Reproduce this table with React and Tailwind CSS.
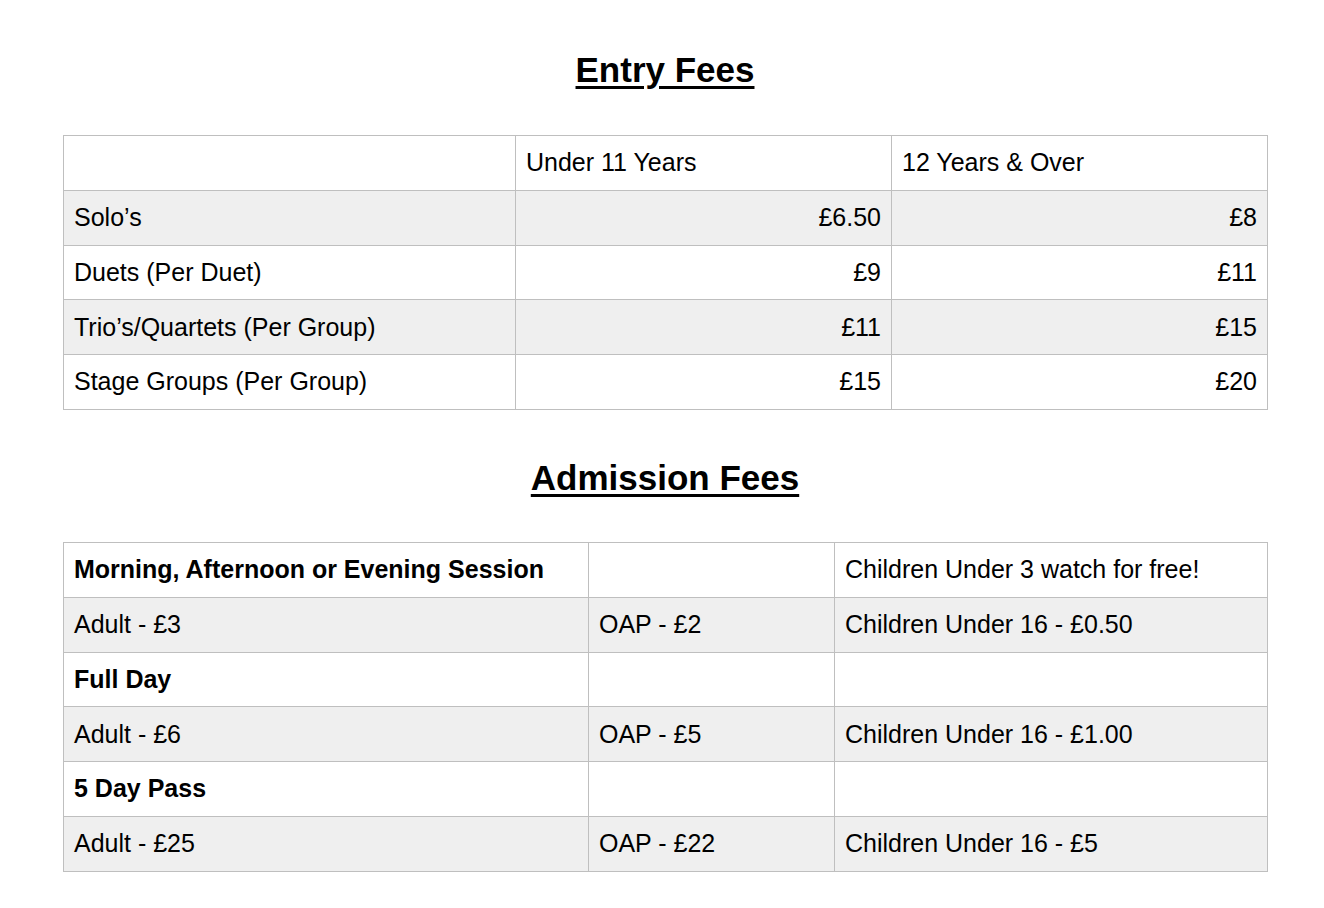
const entry = [
  ['Solo’s', '£6.50', '£8'],
  ['Duets (Per Duet)', '£9', '£11'],
  ['Trio’s/Quartets (Per Group)', '£11', '£15'],
  ['Stage Groups (Per Group)', '£15', '£20'],
]

const admission = [
  { cells: ['Morning, Afternoon or Evening Session', '', 'Children Under 3 watch for free!'], bold: true },
  { cells: ['Adult - £3', 'OAP - £2', 'Children Under 16 - £0.50'] },
  { cells: ['Full Day', '', ''], bold: true },
  { cells: ['Adult - £6', 'OAP - £5', 'Children Under 16 - £1.00'] },
  { cells: ['5 Day Pass', '', ''], bold: true },
  { cells: ['Adult - £25', 'OAP - £22', 'Children Under 16 - £5'] },
]

function Title({ children, className }) {
  return (
    <h2 className={`text-center text-[35px] leading-[40px] font-bold underline decoration-[3px] underline-offset-[4px] ${className}`}>
      {children}
    </h2>
  )
}

export default function App() {
  return (
    <div className="min-h-[908px] bg-white text-black" style={{ fontFamily: '"Liberation Sans", Arial, sans-serif' }}>
      <div className="ml-[63px] w-[1204px] pt-[50px]">
        <Title className="mb-[45px]">Entry Fees</Title>

        <table className="w-[1204px] table-fixed border-collapse text-[25px]">
          <colgroup>
            <col className="w-[452px]" />
            <col className="w-[376px]" />
            <col className="w-[376px]" />
          </colgroup>
          <tbody>
            <tr className="h-[54.8px]">
              <td className="border border-[#bfbfbf] px-[10px]"></td>
              <td className="border border-[#bfbfbf] px-[10px]">Under 11 Years</td>
              <td className="border border-[#bfbfbf] px-[10px]">12 Years &amp; Over</td>
            </tr>
            {entry.map((r, i) => (
              <tr key={r[0]} className={`h-[54.8px] ${i % 2 === 0 ? 'bg-[#efefef]' : 'bg-white'}`}>
                <td className="border border-[#bfbfbf] px-[10px]">{r[0]}</td>
                <td className="border border-[#bfbfbf] px-[10px] text-right">{r[1]}</td>
                <td className="border border-[#bfbfbf] px-[10px] text-right">{r[2]}</td>
              </tr>
            ))}
          </tbody>
        </table>

        <Title className="mt-[48px] mb-[44px]">Admission Fees</Title>

        <table className="w-[1204px] table-fixed border-collapse text-[25px]">
          <colgroup>
            <col className="w-[525px]" />
            <col className="w-[246px]" />
            <col className="w-[433px]" />
          </colgroup>
          <tbody>
            {admission.map((r, i) => (
              <tr key={i} className={`h-[54.8px] ${i % 2 === 1 ? 'bg-[#efefef]' : 'bg-white'}`}>
                <td className={`border border-[#bfbfbf] px-[10px] ${r.bold ? 'font-bold' : ''}`}>{r.cells[0]}</td>
                <td className="border border-[#bfbfbf] px-[10px]">{r.cells[1]}</td>
                <td className="border border-[#bfbfbf] px-[10px]">{r.cells[2]}</td>
              </tr>
            ))}
          </tbody>
        </table>
      </div>
    </div>
  )
}
